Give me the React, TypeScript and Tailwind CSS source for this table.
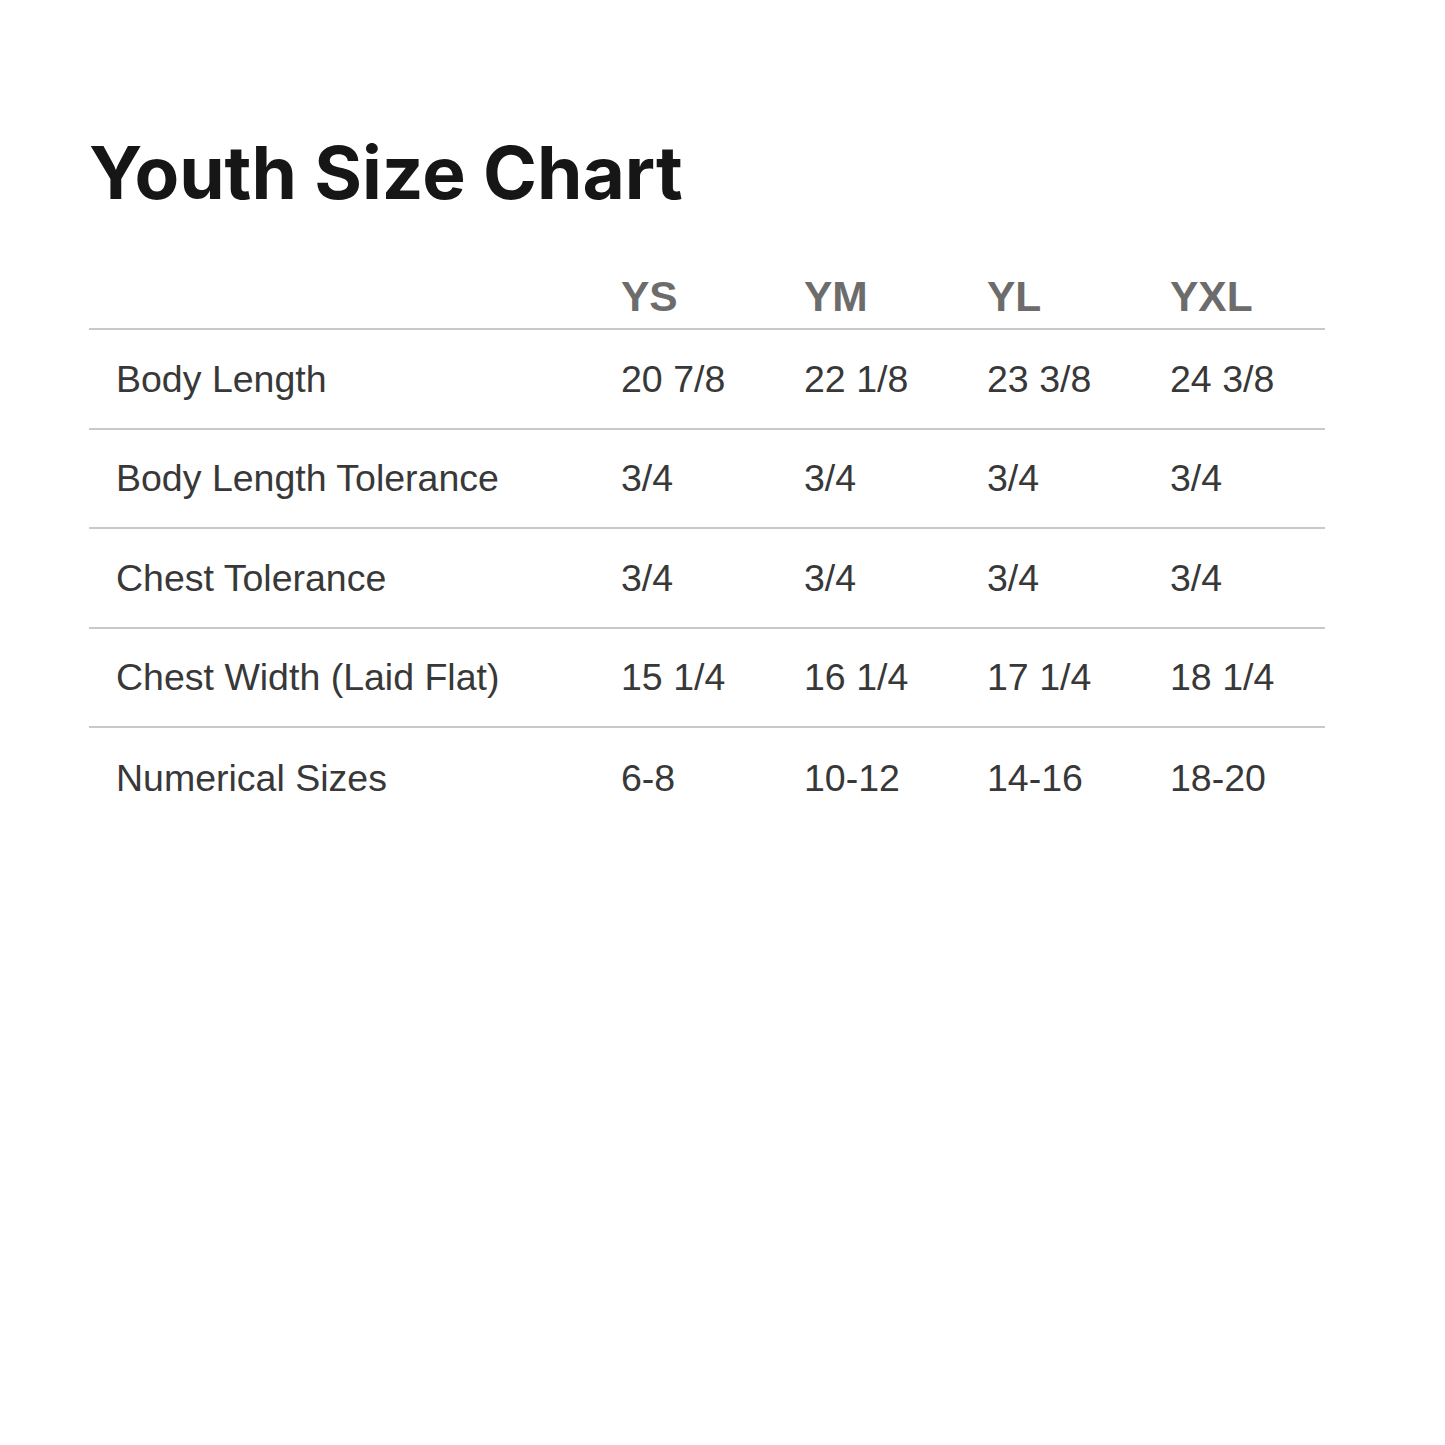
const sizes = ["YS", "YM", "YL", "YXL"];

const rows: { label: string; values: string[] }[] = [
	{ label: "Body Length", values: ["20 7/8", "22 1/8", "23 3/8", "24 3/8"] },
	{ label: "Body Length Tolerance", values: ["3/4", "3/4", "3/4", "3/4"] },
	{ label: "Chest Tolerance", values: ["3/4", "3/4", "3/4", "3/4"] },
	{ label: "Chest Width (Laid Flat)", values: ["15 1/4", "16 1/4", "17 1/4", "18 1/4"] },
	{ label: "Numerical Sizes", values: ["6-8", "10-12", "14-16", "18-20"] },
];

export default function App() {
	return (
		<div className="w-[1445px] h-[1445px] bg-white pl-[89px] pt-[129px]">
			<h1 className="font-['Inter',sans-serif] font-bold text-[73px] leading-[88px] text-[#161616]">
				Youth Size Chart
			</h1>

			<div className="mt-[45px] w-[1236px] font-['Liberation_Sans',Arial,sans-serif]">
				{/* header */}
				<div className="grid grid-cols-[505px_repeat(4,183px)] h-[68px] border-b-2 border-[#c9c9c9] items-end pb-[10px]">
					<div></div>
					{sizes.map((s) => (
						<div key={s} className="pl-[27px] text-[42.5px] leading-none font-bold text-[#6c6c6c]">
							{s}
						</div>
					))}
				</div>

				{rows.map((row, i) => (
					<div
						key={row.label}
						className={`grid grid-cols-[505px_repeat(4,183px)] h-[99.5px] items-center text-[37.5px] text-[#383838] ${
							i < rows.length - 1 ? "border-b-2 border-[#c9c9c9]" : ""
						}`}
					>
						<div className="pl-[27px]">{row.label}</div>
						{row.values.map((v, j) => (
							<div key={j} className="pl-[27px]">
								{v}
							</div>
						))}
					</div>
				))}
			</div>
		</div>
	);
}
